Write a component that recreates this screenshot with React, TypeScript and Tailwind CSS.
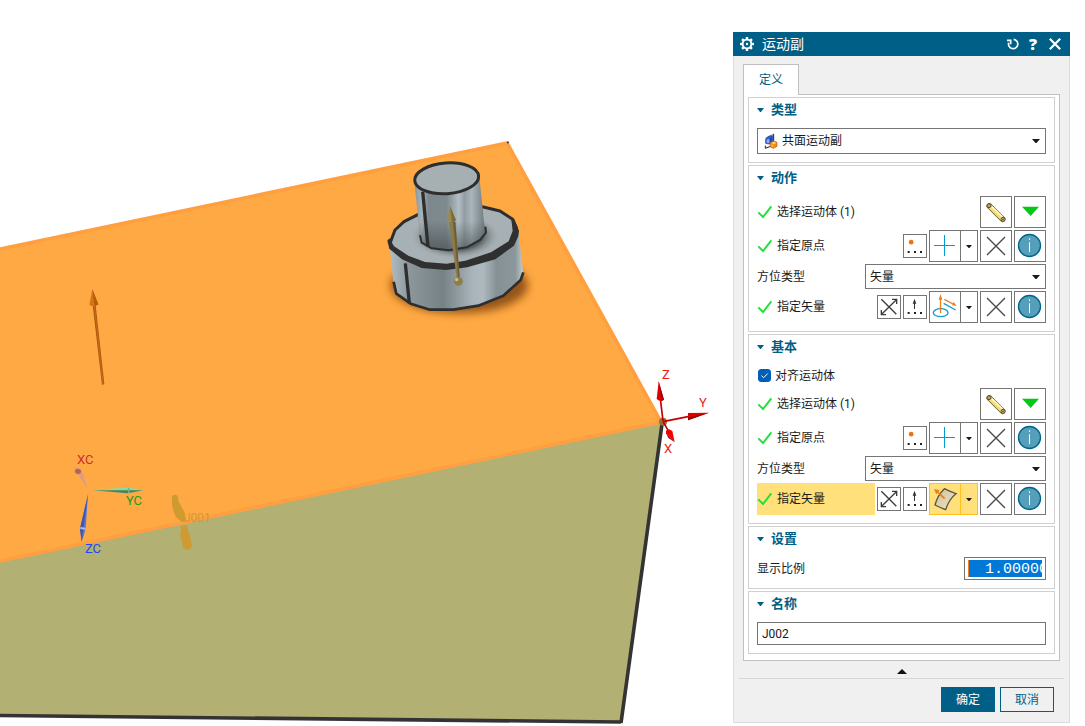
import { useState } from 'react';
import type { ReactNode } from 'react';
import clsx from 'clsx';

/* ---------- icons ---------- */

function GearIcon() {
  return (
    <svg viewBox="0 0 14 14" className="h-3.5 w-3.5" fill="none" stroke="#fff">
      <circle cx="7" cy="7" r="4.4" strokeWidth="2" />
      {[0, 45, 90, 135, 180, 225, 270, 315].map((a) => (
        <path key={a} d="M7 0v2.2" strokeWidth="2.4" transform={`rotate(${a} 7 7)`} />
      ))}
      <circle cx="7" cy="7" r="1.2" fill="#fff" stroke="none" />
    </svg>
  );
}

function ResetIcon() {
  return (
    <svg viewBox="0 0 42 42" className="h-3.5 w-3.5" fill="none" stroke="#fff" strokeWidth="5">
      <path d="M23 7A14 14 0 1 1 8 17" />
      <path d="M3 10H14V22" strokeWidth="5" />
    </svg>
  );
}

function CloseIcon() {
  return (
    <svg viewBox="0 0 14 14" className="h-3.5 w-3.5" stroke="#fff" strokeWidth="2.2">
      <path d="M1.800 1.800l10.400 10.400M12.200 1.800L1.800 12.200" />
    </svg>
  );
}

function PlaneJointIcon() {
  return (
    <svg viewBox="0 0 42 48" className="h-4 w-3.5">
      <path d="M4 15L29 3V38L4 46Z" fill="#f2f4f8" />
      <path d="M29 3V26M4 46L20 40M4 46V38" stroke="#222" strokeWidth="3" fill="none" />
      <path d="M4 15L29 3" stroke="#666" strokeWidth="2" />
      <path d="M5 18L14 10L26 8V25L18 33L5 31Z" fill="#2f5fd8" stroke="#16389c" strokeWidth="2" />
      <path d="M8 20L16 18V30L8 29Z" fill="#8fb2ff" />
      <path d="M18 16L24 11V24L18 29Z" fill="#1d44b8" />
      <path d="M19 29L29 24L39 28V40L29 46L19 42Z" fill="#f58a12" stroke="#b25a06" strokeWidth="2" />
      <path d="M21 30L29 27L37 30L29 33Z" fill="#ffd894" />
      <path d="M22 34L28 36V42L22 40Z" fill="#ffb74a" />
    </svg>
  );
}

function CheckIcon() {
  return (
    <svg viewBox="0 0 48 48" className="h-4 w-4 shrink-0">
      <path d="M4 25L18 39L43 7" fill="none" stroke="#22e03a" strokeWidth="6" />
    </svg>
  );
}

function LinkIcon() {
  return (
    <svg viewBox="3 3 90 90" className="h-[30px] w-[30px]" fill="none">
      <path d="M28 30L68 70" stroke="#6b6030" strokeWidth="17" strokeLinecap="round" />
      <path d="M28 30L68 70" stroke="#f4dd72" strokeWidth="12" strokeLinecap="round" />
      <path d="M35 32L68 63" stroke="#fffad0" strokeWidth="5" />
      <circle cx="27" cy="29" r="6" fill="#b8a468" stroke="#5b4d24" strokeWidth="3" />
      <circle cx="69" cy="70" r="6" fill="#e4cf7a" stroke="#5b4d24" strokeWidth="3" />
      <circle cx="69" cy="70" r="2.5" fill="#3d350f" />
    </svg>
  );
}

function GreenDownIcon() {
  return (
    <svg viewBox="3 3 90 90" className="h-[30px] w-[30px]">
      <path d="M24 32H75L50 60Z" fill="#04c814" />
    </svg>
  );
}

function PlusIcon() {
  return (
    <svg viewBox="3 3 90 90" className="h-[30px] w-[30px]" stroke="#00a0cc" strokeWidth="3">
      <path d="M15 46.500H78M46.500 15V78" />
    </svg>
  );
}

function CrossIcon() {
  return (
    <svg viewBox="3 3 90 90" className="h-[30px] w-[30px]" stroke="#4a4a4a" strokeWidth="4">
      <path d="M21 21L75 75M75 21L21 75" />
    </svg>
  );
}

function InfoIcon() {
  return (
    <svg viewBox="3 3 90 90" className="h-[30px] w-[30px]">
      <circle cx="46.500" cy="46.500" r="33" fill="#559fbb" stroke="#00658a" strokeWidth="4" />
      <path d="M46.500 37V66M46.500 25V30" stroke="#fff" strokeWidth="3" />
    </svg>
  );
}

function PointDotsIcon() {
  return (
    <svg viewBox="3 3 66 66" className="h-[22px] w-[22px]">
      <circle cx="24.500" cy="24.500" r="7" fill="#e8741a" />
      <path d="M14 54h6M33 54h6M51 54h6" stroke="#222" strokeWidth="6" />
    </svg>
  );
}

function VectorDotsIcon() {
  return (
    <svg viewBox="3 3 66 66" className="h-[22px] w-[22px]">
      <path d="M34.500 20V42" stroke="#333" strokeWidth="3" />
      <path d="M34.500 11L40 26H29Z" fill="#333" />
      <path d="M14 54h6M33 54h6M51 54h6" stroke="#222" strokeWidth="6" />
    </svg>
  );
}

function ReverseIcon() {
  return (
    <svg viewBox="3 3 66 66" className="h-[22px] w-[22px]" fill="none" stroke="#3c3c3c" strokeWidth="4">
      <path d="M13 13L58 58M58 14L14 58" />
      <path d="M45 13H59V27M13 45V59H27" />
    </svg>
  );
}

function InferredVectorIcon() {
  return (
    <svg viewBox="3 3 90 90" className="h-[30px] w-[30px]" fill="none" strokeWidth="4">
      <ellipse cx="35" cy="65" rx="22" ry="12" stroke="#10a0cc" strokeWidth="4" />
      <path d="M44 37L80 57" stroke="#10a0cc" />
      <path d="M34.500 66V20M46 25L72 39" stroke="#f07d1e" />
      <path d="M34.500 10L40 26H29ZM83 45L69 43L74 33Z" fill="#f07d1e" />
    </svg>
  );
}

function SurfaceNormalIcon() {
  return (
    <svg viewBox="3 3 90 90" className="h-[30px] w-[30px]" fill="none">
      <defs>
        <linearGradient id="surface" x1="0" y1="0" x2="1" y2="1">
          <stop offset="0" stopColor="#cdbf98" />
          <stop offset="1" stopColor="#f0e6c8" />
        </linearGradient>
      </defs>
      <path
        d="M46 17Q64 26 81 32Q60 48 50 80Q34 74 18 66Q25 38 46 17Z"
        fill="url(#surface)"
        stroke="#5b5546"
        strokeWidth="4"
      />
      <path d="M47 47L26 27" stroke="#f07a14" strokeWidth="5" />
      <path d="M15 18L32 22L22 34Z" fill="#f07a14" />
    </svg>
  );
}

function Caret({ className }: { className?: string }) {
  return (
    <svg viewBox="0 0 8 4" preserveAspectRatio="none" className={className} fill="currentColor">
      <path d="M0 0H8L4.500 4H3.500Z" />
    </svg>
  );
}

/* ---------- form parts ---------- */

function Group({ title, children }: { title: string; children: ReactNode }) {
  const [open, setOpen] = useState(true);
  return (
    <section className="border border-[#d0d0d0] bg-white px-2">
      <h2>
        <button
          type="button"
          aria-expanded={open}
          onClick={() => setOpen(!open)}
          className="flex h-6 w-full items-center gap-[7px] text-[13px] font-bold text-[#005f87]"
        >
          <Caret className={clsx('h-1 w-[7px]', !open && '-rotate-90')} />
          {title}
        </button>
      </h2>
      {open && <div className="flex flex-col gap-0.5 pt-1.5 pb-2">{children}</div>}
    </section>
  );
}

function ToolButton({ label, small, children }: { label: string; small?: boolean; children: ReactNode }) {
  return (
    <button
      type="button"
      aria-label={label}
      className={clsx(
        'flex shrink-0 items-center justify-center border border-[#757575] bg-white hover:bg-gray-50',
        small ? 'h-6 w-6' : 'h-8 w-8'
      )}
    >
      {children}
    </button>
  );
}

function SplitButton({ label, active, children }: { label: string; active?: boolean; children: ReactNode }) {
  return (
    <div
      className={clsx(
        'flex h-8 shrink-0 border',
        active ? 'border-[#ffc020] bg-[#ffe07a]' : 'border-[#757575] bg-white'
      )}
    >
      <button type="button" aria-label={label} className="flex w-[30px] items-center justify-center">
        {children}
      </button>
      <button
        type="button"
        aria-label={`${label} ▾`}
        className={clsx(
          'flex w-[17px] items-center justify-center border-l',
          active ? 'border-[#ffc020]' : 'border-[#757575]'
        )}
      >
        <Caret className="h-[3px] w-1.5" />
      </button>
    </div>
  );
}

function Row({ label, active, children }: { label: string; active?: boolean; children: ReactNode }) {
  return (
    <div className="flex items-center gap-0.5">
      <span className={clsx('flex h-8 flex-1 items-center gap-1', active && 'bg-[#ffe07a]')}>
        <CheckIcon />
        {label}
      </span>
      {children}
    </div>
  );
}

function BodyRow() {
  return (
    <Row label="选择运动体 (1)">
      <ToolButton label="选择运动体">
        <LinkIcon />
      </ToolButton>
      <ToolButton label="更多">
        <GreenDownIcon />
      </ToolButton>
    </Row>
  );
}

function OriginRow() {
  return (
    <Row label="指定原点">
      <ToolButton label="点对话框" small>
        <PointDotsIcon />
      </ToolButton>
      <SplitButton label="点">
        <PlusIcon />
      </SplitButton>
      <ToolButton label="清除">
        <CrossIcon />
      </ToolButton>
      <ToolButton label="信息">
        <InfoIcon />
      </ToolButton>
    </Row>
  );
}

function OrientationRow({ id }: { id: string }) {
  return (
    <div className="flex items-center justify-between">
      <label htmlFor={id}>方位类型</label>
      <div className="relative w-[181px]">
        <select id={id} className="block h-[25px] w-full appearance-none border border-[#757575] bg-white pl-1">
          <option>矢量</option>
        </select>
        <Caret className="pointer-events-none absolute top-1/2 right-1.5 h-1 w-2 -translate-y-1/2" />
      </div>
    </div>
  );
}

function VectorRow({ active, children }: { active?: boolean; children: ReactNode }) {
  return (
    <Row label="指定矢量" active={active}>
      <ToolButton label="反向" small>
        <ReverseIcon />
      </ToolButton>
      <ToolButton label="矢量对话框" small>
        <VectorDotsIcon />
      </ToolButton>
      <SplitButton label="矢量" active={active}>
        {children}
      </SplitButton>
      <ToolButton label="清除">
        <CrossIcon />
      </ToolButton>
      <ToolButton label="信息">
        <InfoIcon />
      </ToolButton>
    </Row>
  );
}

/* ---------- 3D view ---------- */

function Viewport() {
  return (
    <svg viewBox="0 0 733 726" className="block h-auto w-full font-['Roboto',sans-serif]">
      <defs>
        <linearGradient id="hub" x1="0" x2="1" y1="0" y2="0">
          <stop offset="0" stopColor="#87939a" />
          <stop offset="0.1" stopColor="#a9b4b9" />
          <stop offset="0.2" stopColor="#7d888c" />
          <stop offset="0.45" stopColor="#7f8a8e" />
          <stop offset="0.62" stopColor="#b2bec3" />
          <stop offset="0.7" stopColor="#929ea3" />
          <stop offset="0.8" stopColor="#a9b5ba" />
          <stop offset="1" stopColor="#6c7679" />
        </linearGradient>
        <linearGradient id="hubShade" x1="0" x2="0" y1="0" y2="1">
          <stop offset="0.6" stopColor="#3c4446" stopOpacity="0" />
          <stop offset="1" stopColor="#3c4446" stopOpacity="0.6" />
        </linearGradient>
        <linearGradient id="flange" x1="0" x2="1" y1="0" y2="0">
          <stop offset="0" stopColor="#b3bec3" />
          <stop offset="0.15" stopColor="#8c979b" />
          <stop offset="0.4" stopColor="#778286" />
          <stop offset="0.62" stopColor="#a8b4b9" />
          <stop offset="0.7" stopColor="#adb9be" />
          <stop offset="0.8" stopColor="#859195" />
          <stop offset="0.94" stopColor="#8b979b" />
          <stop offset="1" stopColor="#c2cdd1" />
        </linearGradient>
        <radialGradient id="contact" cx="0.5" cy="0.5" r="0.5">
          <stop offset="0.6" stopColor="#555d60" />
          <stop offset="1" stopColor="#a7b0b4" stopOpacity="0" />
        </radialGradient>
        <filter id="soft" x="-20%" y="-40%" width="140%" height="180%">
          <feGaussianBlur stdDeviation="13" />
        </filter>
      </defs>

      {/* block */}
      <path d="M0 562L662 423L621 721L0 715Z" fill="#b2b073" />
      <path d="M0 248L508 142L662 422L0 561Z" fill="#ffa944" />
      <path d="M0 715.500L621 722" stroke="#333" strokeWidth="3.600" />
      <path d="M662 424L621 723" stroke="#333" strokeWidth="3.600" />
      <path d="M0 249L507 143L661 422L0 561" fill="none" stroke="#ff9f40" strokeWidth="3.600" />
      <circle cx="508" cy="142.500" r="1" fill="#333" />

      {/* flanged pin */}
      <g transform="translate(370 130) scale(0.33333)" strokeLinejoin="round">
        <ellipse cx="268" cy="466" rx="206" ry="84" fill="#7a3f10" opacity="0.8" filter="url(#soft)" />
        <path
          d="M58 340L70 458L79 491L122 521L180 539L250 539L325 527L400 497L452 450L460 430L445 305Z"
          fill="url(#flange)"
        />
        <path
          d="M71 455L79 491L122 521L180 539L250 539L325 527L400 497L452 450L460 427"
          fill="none"
          stroke="#2e2e2e"
          strokeWidth="8"
        />
        <path d="M106 400L118 520" stroke="#2e2e2e" strokeWidth="10" />
        <path
          d="M60 340L75 300L102 275L145 253L240 228L340 231L390 243L428 268L444 305L430 338L370 376L290 400L230 409L160 405L100 380Z"
          fill="#a7b0b4"
        />
        <ellipse cx="256" cy="318" rx="135" ry="70" fill="url(#contact)" />
        <path
          d="M60 340L75 300L102 275L145 253L240 228L340 231L390 243L428 268L440 295"
          fill="none"
          stroke="#2e2e2e"
          strokeWidth="9"
        />
        <path
          d="M52 332L58 325L72 349L115 377L165 396L230 401L286 392L363 367L416 334L428 303L424 268L432 266L447 302L445 318L432 347L376 388L292 412L228 420L155 414L96 388L58 356Z"
          fill="#303030"
        />
        <path
          d="M133 155L150 320L155 338L185 355L235 361L290 352L330 330L348 308L343 285L328 140Z"
          fill="url(#hub)"
        />
        <path
          d="M133 155L150 320L155 338L185 355L235 361L290 352L330 330L348 308L343 285L328 140Z"
          fill="url(#hubShade)"
        />
        <path
          d="M150 316L155 338L185 355L235 361L290 352L330 330L348 308L346 290"
          fill="none"
          stroke="#2e2e2e"
          strokeWidth="6"
        />
        <path d="M158 185L174 350" stroke="#2e2e2e" strokeWidth="10" />
        <ellipse
          cx="230"
          cy="145"
          rx="96"
          ry="46"
          transform="rotate(-4 230 145)"
          fill="#a6afb2"
          stroke="#2e2e2e"
          strokeWidth="9"
        />
        <path d="M237 275L256 275L269 443L260 443Z" fill="#8b7b4b" />
        <path d="M249 277L256 275L269 443L265 443Z" fill="#6c5e36" />
        <path d="M240 228L231 271Q244 284 258 271Z" fill="#9c8a50" />
        <path d="M240 228L246 278L258 271Z" fill="#7c6d3e" />
        <circle cx="265" cy="454" r="13" fill="#8d7d48" />
        <circle cx="260" cy="449" r="5" fill="#cdbf84" />
      </g>

      {/* direction arrow, work coordinate system, joint marker */}
      <g transform="translate(50 270) scale(0.33333)">
        <path d="M128 106H137L163 342L156 345Z" fill="#a8590c" />
        <path d="M131 106L135 106L161 342L157 343Z" fill="#c4681a" />
        <path d="M127 58L118 104Q131 114 145 103Z" fill="#d97414" />
        <path d="M127 58L134 109L145 103Z" fill="#b45c0b" />

        <path d="M75 589L74 603L84 613L113 656L94 600Z" fill="#dd9a88" />
        <ellipse cx="84" cy="604" rx="9" ry="8" fill="#b0655a" />
        <path d="M128 661L233 652L280 661L233 670Z" fill="#8fd9a0" />
        <path d="M128 661L280 661L233 670Z" fill="#4f7f56" />
        <path d="M236 654V669" stroke="#7fae86" strokeWidth="5" />
        <path d="M114 673L90 776L95 815L107 776Z" fill="#5573d8" />
        <path d="M114 673L100 776L95 815L90 776Z" fill="#3f56b0" />
        <path d="M91 774L107 776" stroke="#a9bbec" strokeWidth="6" />

        <path d="M375 684L377 712L386 736L398 746" fill="none" stroke="#cf9a30" strokeWidth="19" strokeLinecap="round" strokeLinejoin="round" />
        <path d="M378 704L394 734" stroke="#cf9a30" strokeWidth="23" strokeLinecap="round" />
        <path d="M402 766L405 795L411 828" fill="none" stroke="#cf9a30" strokeWidth="19" strokeLinejoin="round" />
        <path d="M404 792L412 826" fill="none" stroke="#cf9a30" strokeWidth="27" strokeLinecap="round" />
      </g>
      <text x="77" y="464" fontSize="13" fill="#c8322d">XC</text>
      <text x="126" y="505" fontSize="13" fill="#1d9a20">YC</text>
      <text x="85" y="553" fontSize="13" fill="#2a45f0">ZC</text>
      <text x="184" y="522" fontSize="12" fill="#cf9a30">J001</text>

      {/* absolute triad */}
      <g transform="translate(600 350) scale(0.33333)">
        <circle cx="189" cy="215" r="12" fill="#8a7440" />
        <path d="M189 213L181 145M189 215L268 199M189 215L206 244" stroke="#c40000" strokeWidth="5" />
        <path d="M176 94L170 147Q181 157 192 149Z" fill="#e00000" />
        <path d="M176 94L184 153L192 149Z" fill="#a80000" />
        <path d="M327 188L264 189L264 211Z" fill="#e00000" />
        <path d="M327 188L264 202V211Z" fill="#a00000" />
        <path d="M224 277L198 250L198 242L207 238L217 243Z" fill="#f00000" />
        <path d="M224 277L205 264L198 250Z" fill="#b00000" />
      </g>
      <text x="662" y="379" fontSize="13" fill="#f02020">Z</text>
      <text x="699" y="407" fontSize="13" fill="#f02020">Y</text>
      <text x="664" y="453" fontSize="13" fill="#f02020">X</text>
    </svg>
  );
}

/* ---------- dialog ---------- */

function JointDialog() {
  const [align, setAlign] = useState(true);
  const [scale, setScale] = useState('1.00000');
  const [name, setName] = useState('J002');

  return (
    <aside className="mt-8 mr-[15px] mb-[3px] w-[337px] shrink-0 self-start bg-[#f0f0f0] text-xs text-[#1a1a1a]">
      <header className="flex h-6 items-center bg-[#005f87] pr-2 pl-[7px] text-white">
        <GearIcon />
        <h1 className="flex-1 pl-2 text-sm">运动副</h1>
        <div className="flex items-center gap-2">
          <button type="button" aria-label="重置">
            <ResetIcon />
          </button>
          <button type="button" className="w-2.5 font-['Open_Sans',sans-serif] text-base leading-6 font-extrabold">
            ?
          </button>
          <button type="button" aria-label="关闭" className="pl-0.5">
            <CloseIcon />
          </button>
        </div>
      </header>

      <div className="border border-t-0 border-[#dcdcdc]">
        <div className="px-[9px] pt-2">
          <button
            type="button"
            className="relative -mb-px block h-[31px] w-14 border border-b-0 border-[#c0c0c0] bg-white text-[#005f87]"
          >
            定义
          </button>
          <div className="flex flex-col gap-0.5 border border-[#c0c0c0] bg-white px-1 pt-0.5 pb-1.5">
            <Group title="类型">
              <div className="relative">
                <select
                  aria-label="类型"
                  className="block h-[26px] w-full appearance-none border border-[#757575] bg-white pl-6"
                >
                  <option>共面运动副</option>
                </select>
                <span className="pointer-events-none absolute top-1/2 left-[7px] -translate-y-1/2">
                  <PlaneJointIcon />
                </span>
                <Caret className="pointer-events-none absolute top-1/2 right-1.5 h-1 w-2 -translate-y-1/2" />
              </div>
            </Group>

            <Group title="动作">
              <BodyRow />
              <OriginRow />
              <OrientationRow id="orient-action" />
              <VectorRow>
                <InferredVectorIcon />
              </VectorRow>
            </Group>

            <Group title="基本">
              <label className="flex h-[21px] items-center gap-1 pl-px">
                <span className="relative h-[13px] w-[13px]">
                  <input
                    type="checkbox"
                    checked={align}
                    onChange={(e) => setAlign(e.target.checked)}
                    className="block h-[13px] w-[13px] appearance-none rounded-[3px] border border-[#005fb8] bg-white checked:bg-[#005fb8]"
                  />
                  {align && (
                    <svg viewBox="0 0 13 13" className="pointer-events-none absolute inset-0" fill="none" stroke="#fff">
                      <path d="M3.500 6.700L5.600 8.700L9.700 4.600" />
                    </svg>
                  )}
                </span>
                对齐运动体
              </label>
              <BodyRow />
              <OriginRow />
              <OrientationRow id="orient-base" />
              <VectorRow active>
                <SurfaceNormalIcon />
              </VectorRow>
            </Group>

            <Group title="设置">
              <div className="flex items-center justify-between">
                <label htmlFor="scale">显示比例</label>
                <div className="w-[82px] border border-[#757575] bg-white px-[3px] py-0.5">
                  <input
                    id="scale"
                    value={scale}
                    onChange={(e) => setScale(e.target.value)}
                    className="block h-[17px] w-full border-l border-[#f08030] bg-[#0078d7] pt-0.5 pl-4 font-['Liberation_Mono',monospace] text-[15px] text-white outline-none"
                  />
                </div>
              </div>
            </Group>

            <Group title="名称">
              <input
                aria-label="名称"
                value={name}
                onChange={(e) => setName(e.target.value)}
                className="block h-[23px] w-full border border-[#757575] bg-white px-1 outline-none"
              />
            </Group>
          </div>
        </div>

        <button type="button" aria-label="收起" className="flex h-[17px] w-full items-center justify-center pt-1">
          <svg viewBox="0 0 10 5" className="h-[5px] w-2.5" fill="#111">
            <path d="M0 5H10L5 0Z" />
          </svg>
        </button>
        <footer className="mx-[5px] flex justify-end gap-[5px] border-t border-[#d4d4d4] pt-2 pr-2.5 pb-2.5">
          <button type="button" className="h-[25px] w-[54px] border border-[#005f87] bg-[#005f87] text-white">
            确定
          </button>
          <button type="button" className="h-[25px] w-[54px] border border-[#005f87] text-[#005f87]">
            取消
          </button>
        </footer>
      </div>
    </aside>
  );
}

export default function App() {
  return (
    <main className="flex min-h-screen bg-white font-['Roboto','Noto_Sans_CJK_SC',sans-serif]">
      <div className="min-w-0 flex-1">
        <Viewport />
      </div>
      <JointDialog />
    </main>
  );
}
